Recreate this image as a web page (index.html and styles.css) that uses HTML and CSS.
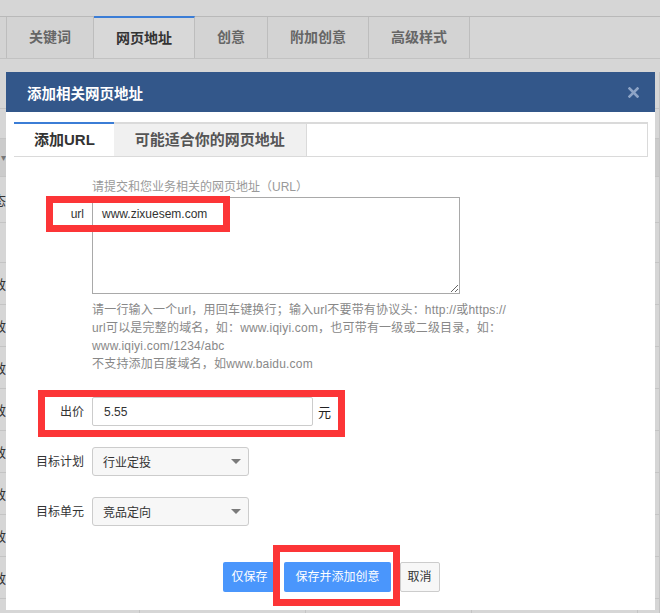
FILE: index.html
```html
<html>
	<head>
		<title>添加相关网页地址</title>
		<link rel="stylesheet" href="styles.css">
	</head>
	<body>
		<div class="top"></div>
		<div class="tabs">
			<span class="tab stub"></span>
			<span class="tab">关键词</span>
			<span class="tab active">网页地址</span>
			<span class="tab">创意</span>
			<span class="tab">附加创意</span>
			<span class="tab">高级样式</span>
		</div>

		<div class="table">
			<div class="row r37"><span class="first"></span><span></span><span></span><span></span><span></span><span></span></div>
			<div class="row r30"><span class="first"></span><span></span><span></span><span></span><span></span><span></span></div>
			<div class="row r38 head"><span class="first">▾</span><span></span><span></span><span></span><span></span><span></span></div>
			<div class="row r46"><span class="first">状态</span><span></span><span></span><span></span><span></span><span></span></div>
			<div class="row r40"><span class="first"></span><span></span><span></span><span></span><span></span><span></span></div>
			<div class="row"><span class="first">有效</span><span></span><span></span><span></span><span></span><span></span></div>
			<div class="row"><span class="first">有效</span><span></span><span></span><span></span><span></span><span></span></div>
			<div class="row"><span class="first">有效</span><span></span><span></span><span></span><span></span><span></span></div>
			<div class="row"><span class="first">有效</span><span></span><span></span><span></span><span></span><span></span></div>
			<div class="row"><span class="first">有效</span><span></span><span></span><span></span><span></span><span></span></div>
			<div class="row"><span class="first">有效</span><span></span><span></span><span></span><span></span><span></span></div>
			<div class="row"><span class="first">有效</span><span></span><span></span><span></span><span></span><span></span></div>
			<div class="row"><span class="first">有效</span><span></span><span></span><span></span><span></span><span></span></div>
			<div class="row"><span class="first">有效</span><span></span><span></span><span></span><span></span><span></span></div>
		</div>

		<div class="modal">
			<div class="modal-head">
				<span class="modal-title">添加相关网页地址</span>
				<svg class="close" width="11" height="11" viewBox="0 0 11 11">
					<path d="M1.5 1.5 L9.5 9.5 M9.5 1.5 L1.5 9.5" stroke="#8ea4c6" stroke-width="2.6" stroke-linecap="square"/>
				</svg>
			</div>
			<div class="modal-body">
				<div class="subtabs">
					<span class="subtab active">添加URL</span>
					<span class="subtab">可能适合你的网页地址</span>
				</div>

				<div class="form">
					<div class="line hint-row">
						<span class="label"></span>
						<span class="hint">请提交和您业务相关的网页地址（URL）</span>
					</div>
					<div class="line url-row">
						<span class="label">url</span>
						<textarea class="urls">www.zixuesem.com</textarea>
					</div>
					<div class="line help-row">
						<span class="label"></span>
						<div class="help">
							<div>请一行输入一个url，用回车键换行；输入url不要带有协议头：http://或https://</div>
							<div>url可以是完整的域名，如：www.iqiyi.com，也可带有一级或二级目录，如：</div>
							<div>www.iqiyi.com/1234/abc</div>
							<div>不支持添加百度域名，如www.baidu.com</div>
						</div>
					</div>
					<div class="line field-row price-row">
						<span class="label">出价</span>
						<input class="price" type="text" value="5.55">
						<span class="unit">元</span>
					</div>
					<div class="line field-row">
						<span class="label">目标计划</span>
						<div class="select"><span>行业定投</span><i class="caret"></i></div>
					</div>
					<div class="line field-row">
						<span class="label">目标单元</span>
						<div class="select"><span>竞品定向</span><i class="caret"></i></div>
					</div>
				</div>

				<div class="actions">
					<a href="#" class="btn primary only">仅保存</a>
					<a href="#" class="btn primary more">保存并添加创意</a>
					<a href="#" class="btn cancel">取消</a>
				</div>
			</div>
		</div>

		<!-- annotation boxes drawn over the screenshot -->
		<div class="mark mark-url"></div>
		<div class="mark mark-price"></div>
		<div class="mark mark-save"></div>
	</body>
</html>
```

FILE: styles.css
```css
body {
	margin: 0px;
	width: 660px;
	height: 613px;
	overflow: hidden;
	position: relative;
	background: #d6d6d6;
	font-family: "Liberation Sans", "Noto Sans CJK SC", sans-serif;
	font-size: 12px;
	color: #333;
}

.top {
	height: 16px;
	border-bottom: 1px solid #b9b9b9;
}

.tabs {
	display: flex;
	height: 41px;
	border-bottom: 1px solid #c2c2c2;
}

.tab {
	padding: 0 22px;
	line-height: 41px;
	font-size: 14px;
	font-weight: bold;
	color: #666;
	border-right: 1px solid #bdbdbd;
	background: #d3d3d3;
}

.tab.stub {
	padding: 0;
	width: 6px;
}

.tab.active {
	color: #333;
	background: #d8d8d8;
	border-top: 2px solid #3b7dd6;
	margin-top: -1px;
	line-height: 40px;
}

.table {
	margin-top: 13px;
}

.row {
	display: grid;
	grid-template-columns: 6px 134px 166px 166px 166px 1fr;
	height: 42px;
	border-bottom: 1px solid #c4c4c4;
	box-sizing: border-box;
}

.row span {
	border-right: 1px solid #c4c4c4;
}

.row .first {
	border-right: none;
	display: flex;
	justify-content: flex-end;
	align-items: center;
	overflow: hidden;
	white-space: nowrap;
	font-size: 13px;
	color: #333;
}

.row.r37 { height: 37px; }
.row.r30 { height: 30px; }
.row.r38 { height: 38px; }
.row.r46 { height: 46px; }
.row.r40 { height: 40px; }

.row.head {
	background: #cbcbcb;
}

.row.head .first {
	color: #777;
	font-size: 10px;
}

.modal {
	position: absolute;
	left: 6px;
	top: 72px;
	width: 649px;
	height: 538px;
	background: #fff;
}

.modal-head {
	height: 40px;
	background: #33578a;
	display: flex;
	align-items: center;
	justify-content: space-between;
	padding: 0 16px 0 21px;
}

.modal-title {
	color: #fff;
	font-size: 14.5px;
	font-weight: bold;
}

.modal-body {
	padding: 10px 7px 0 8px;
}

.subtabs {
	display: flex;
	height: 35px;
	box-sizing: border-box;
	border: 1px solid #dadada;
	border-top-width: 2px;
}

.subtab {
	padding: 0 21px;
	line-height: 32px;
	font-size: 15px;
	font-weight: bold;
	color: #555;
	background: #f0f0f0;
	border-right: 1px solid #dadada;
}

.subtab.active {
	color: #333;
	background: #fff;
	border-right: none;
	border-top: 2px solid #3b7dd6;
	margin-top: -2px;
	margin-left: -1px;
	padding: 0 19px 0 20px;
	line-height: 32px;
}

.line {
	display: flex;
}

.label {
	width: 70px;
	flex: none;
	margin-right: 8px;
	text-align: right;
	line-height: 18px;
}

.hint-row {
	margin-top: 21px;
}

.hint {
	color: #999;
	line-height: 18px;
}

.url-row {
	margin-top: 1px;
}

.url-row .label {
	padding-top: 8px;
}

.urls {
	width: 368px;
	height: 97px;
	box-sizing: border-box;
	border: 1px solid #a9a9a9;
	padding: 7px 9px;
	margin: 0;
	font-family: "Liberation Sans", "Noto Sans CJK SC", sans-serif;
	font-size: 12px;
	line-height: 18px;
	color: #333;
	outline: none;
}

.help-row {
	margin-top: 7px;
}

.help {
	color: #888;
	line-height: 18px;
	letter-spacing: 0.2px;
	white-space: nowrap;
}

.field-row {
	align-items: center;
	margin-top: 21px;
}

.price-row {
	margin-top: 24px;
}

.price {
	width: 221px;
	height: 29px;
	box-sizing: border-box;
	border: 1px solid #ccc;
	border-radius: 2px;
	padding: 0 11px;
	margin: 0;
	font-family: "Liberation Sans", "Noto Sans CJK SC", sans-serif;
	font-size: 12px;
	color: #333;
	outline: none;
}

.unit {
	margin-left: 5px;
	font-size: 13px;
	color: #222;
}

.select {
	width: 157px;
	height: 29px;
	box-sizing: border-box;
	border: 1px solid #ccc;
	border-radius: 3px;
	background: #f7f7f7;
	display: flex;
	align-items: center;
	justify-content: space-between;
	padding: 0 7px 0 10px;
	font-size: 12px;
	color: #333;
}

.caret {
	width: 0;
	height: 0;
	border-left: 5px solid transparent;
	border-right: 5px solid transparent;
	border-top: 5px solid #7a7a7a;
}

.actions {
	display: flex;
	justify-content: center;
	gap: 9px;
	margin-top: 36px;
	padding-left: 1px;
}

.btn {
	height: 30px;
	line-height: 30px;
	box-sizing: border-box;
	border-radius: 2px;
	text-decoration: none;
	font-size: 12px;
}

.btn.primary {
	background: #4a96fc;
	color: #fff;
}

.btn.only {
	padding: 0 8px;
}

.btn.more {
	padding: 0 11px;
}

.btn.cancel {
	padding: 0 7px;
	background: #f7f7f7;
	border: 1px solid #ccc;
	line-height: 28px;
	color: #333;
}

.mark {
	position: absolute;
	box-sizing: border-box;
	border: 7px solid #fc3537;
}

.mark-url {
	left: 46px;
	top: 196px;
	width: 184px;
	height: 36px;
}

.mark-price {
	left: 38px;
	top: 390px;
	width: 307px;
	height: 47px;
}

.mark-save {
	left: 273px;
	top: 545px;
	width: 127px;
	height: 61px;
}
```
